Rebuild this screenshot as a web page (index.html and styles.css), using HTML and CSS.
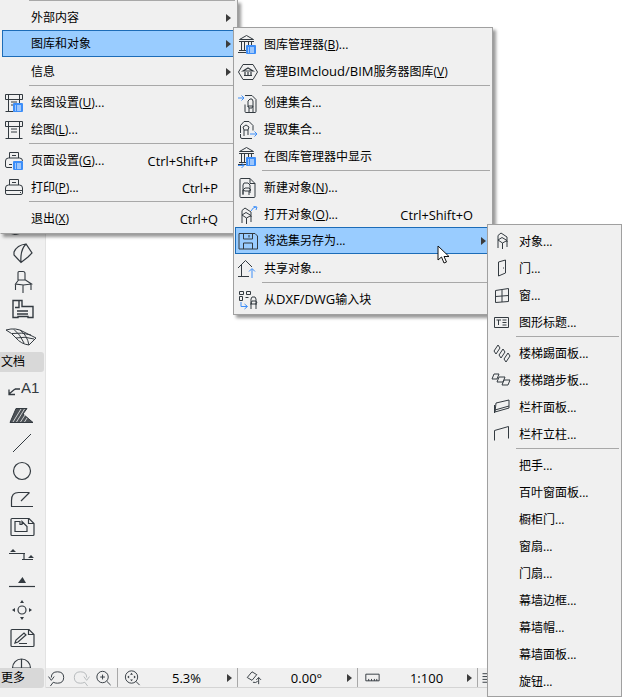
FILE: index.html
```html
<!DOCTYPE html>
<html lang="zh-CN">
<head>
<meta charset="utf-8">
<title>图库和对象</title>
<link rel="stylesheet" href="styles.css">
</head>
<body>
<svg class="defs" width="0" height="0" aria-hidden="true">
  <defs>
    <g id="badge"><rect x="10" y="12" width="10" height="9" rx="1" fill="#3d8ef8" stroke="none"/><path d="M12 15h1M14 15h4M12 17h1M14 17h4M12 19h1M14 19h4" stroke="#fff" fill="none"/></g>
    <g id="bank"><path d="M3.500 6.500 10.500 2.500 17.500 6.500zM3 8.500h15M5.500 9v8M8.500 9v8M12.500 9v8M15.500 9v8M3 17.500h8M2 19.500h8"/></g>
    <g id="chair"><path d="M8 10V5.500L11 3l6 4v5M8 10l4-2.500 5 3-4.500 2.500zM8 10v8M12.500 13v6M17 11v6"/></g>
  </defs>
</svg>

<div class="app">
  <aside class="sidebar">
    <div class="tools">
      <div class="tool"><svg class="ticon" viewBox="0 0 30 28"><path d="M9 21q6 3 13 0"/></svg></div>
      <div class="tool"><svg class="ticon" viewBox="0 0 30 28"><path d="M14 12Q17 5 26 4L32 13 28 17 21 22.500 14 15zM26 4Q20 10 21 22.500" stroke-width="1.200"/></svg></div>
      <div class="tool"><svg class="ticon" viewBox="0 0 30 28"><path d="M18 12V4.500q0-1 1-1h4q2 0 2 2V12M15.500 16l3-4h7l6 4-8 1zM15.500 16v6M23 17v8M31 16v6" stroke-width="1.100"/></svg></div>
      <div class="tool"><svg class="ticon" viewBox="0 0 30 28"><path d="M13 5.500h9v6h11v11h-5v-1H18v1h-5zM19 5.500v7h-4M17 16h11M17 19h11" stroke-width="1.400"/></svg></div>
      <div class="tool"><svg class="ticon" viewBox="0 0 30 28"><path d="M6 7Q16 4 24 9L36 15 29 22Q21 21 16 15 12 10 6 7zM14 6.500Q20 11 24 20M20 7Q27 12 29 22M12 10.500Q22 9 31 12M16 15Q25 13 34 16"/></svg></div>
    </div>
    <div class="tab">文档</div>
    <div class="tools tools-rest">
      <div class="tool"><svg class="ticon" viewBox="0 0 30 28"><path d="M9 20 15 15M9 15.500V20.500H15M15 15H20" stroke-width="1.300"/><text class="ticon-a" x="21" y="19">A1</text></svg></div>
      <div class="tool"><svg class="ticon" viewBox="0 0 30 28"><path d="M10 20.500 16 6.500H27L23 12 33 20.500z" fill="#4c5156" stroke="#333a40"/><path d="M13 20 21 7M16.500 20 24.500 7M20.500 20 25 13M24.500 20 27 16" stroke="#f0f0f0" stroke-width=".8"/></svg></div>
      <div class="tool"><svg class="ticon" viewBox="0 0 30 28"><path d="M13 22 31 4"/></svg></div>
      <div class="tool"><svg class="ticon" viewBox="0 0 30 28"><circle cx="22" cy="14" r="8.500" stroke-width="1.200"/></svg></div>
      <div class="tool"><svg class="ticon" viewBox="0 0 30 28"><path d="M11.500 21.500v-6q0-8 7-8h11M29.500 7.500 21 16M11 21.500h22" stroke-width="1.200"/></svg></div>
      <div class="tool"><svg class="ticon" viewBox="0 0 30 28"><path d="M12 5.500h17l5 5v11q0 1-1 1H12q-1 0-1-1v-15q0-1 1-1zM28.500 5.500v5h5" stroke-width="1.200"/><path d="M15 8.500h5v3h2v-3l5 5v5H15z" stroke-width="1.200"/></svg></div>
      <div class="tool"><svg class="ticon" viewBox="0 0 30 28"><path d="M9 12.500h16M22 18.500h11M24 12.500v6" stroke-width="1.200"/><path d="M13 8l-3 3h6zM31 14l-3 3h6z" fill="#333a40" stroke="none"/></svg></div>
      <div class="tool"><svg class="ticon" viewBox="0 0 30 28"><path d="M22.500 8 26 14h-8z" fill="#333a40" stroke="none"/><path d="M9 17.500h26" stroke-width="1.200"/></svg></div>
      <div class="tool"><svg class="ticon" viewBox="0 0 30 28"><circle cx="22" cy="14" r="4" stroke-width="1.200"/><path d="M22 4l-2 3h4zM22 24l-2-3h4zM12 14l3-2v4zM32 14l-3-2v4z" fill="#333a40" stroke="none"/></svg></div>
      <div class="tool"><svg class="ticon" viewBox="0 0 30 28"><path d="M12 5.500h17l5 5v11q0 1-1 1H12q-1 0-1-1v-15q0-1 1-1zM28.500 5.500v5h5" stroke-width="1.200"/><path d="M15 19l1-3 8-7 2 2-8 7zM19 19.500h8" stroke-width="1.200"/></svg></div>
      <div class="tool"><svg class="ticon" viewBox="0 0 30 28"><circle cx="21.500" cy="16" r="9" stroke-width="1.200"/><path d="M21.500 7v9M13 16h17" stroke-width="1.200"/></svg></div>
    </div>
    <div class="tab tab-more">更多</div>
  </aside>

  <main class="main">
    <div class="canvas"></div>
    <div class="status">
      <div class="tool-btn"><svg class="sicon" viewBox="0 0 23 20"><path d="M5 10q0-6 6.500-6t6.500 6-6.500 6Q9 16 7 15M7 15l-3 4M2 9l3 4 3-4"/></svg></div>
      <div class="tool-btn muted"><svg class="sicon" viewBox="0 0 23 20"><path d="M18 10q0-6-6.500-6T5 10t6.500 6q2.500 0 4.500-1M16 15l3 4M15 9l3 4 3-4"/></svg></div>
      <div class="tool-btn"><svg class="sicon" viewBox="0 0 23 20"><circle cx="10.500" cy="9.500" r="6"/><path d="M15 14l4 4M10.500 7v5M8 9.500h5"/></svg></div>
      <div class="seg">
        <svg class="sicon seg-icon" viewBox="0 0 28 20"><circle cx="13.500" cy="9.500" r="6.500"/><path d="M18 14l4 4"/><path d="M13.500 5l-1.500 2h3zM13.500 14l-1.500-2h3zM9 9.500l2-1.500v3zM18 9.500l-2-1.500v3z" fill="#333a40" stroke="none"/></svg>
        <span class="seg-val">5.3%</span><span class="arrow"></span>
      </div>
      <div class="seg">
        <svg class="sicon seg-icon" viewBox="0 0 28 20"><path d="M9 10l5-6 5 3-5 6zM21 17V10M18.500 12.500 21 10l2.500 2.500M15 15q3 1 5-1"/></svg>
        <span class="seg-val">0.00°</span><span class="arrow"></span>
      </div>
      <div class="seg">
        <svg class="sicon seg-icon" viewBox="0 0 28 20"><path d="M7.500 6.500h14v7h-14zM10.500 13.500v-2M13.500 13.500v-2M16.500 13.500v-2M19 13.500v-2"/></svg>
        <span class="seg-val">1:100</span><span class="arrow"></span>
      </div>
      <div class="seg seg-last"><svg class="sicon seg-icon" viewBox="0 0 28 20"><path d="M4 6h8M4 9h8M4 12h8M4 15h8"/></svg></div>
    </div>
  </main>
</div>

<nav class="menu menu-main">
  <div class="sep"></div>
  <div class="row"><span class="ic"></span><span class="txt">外部内容</span><span class="arrow"></span></div>
  <div class="row hl"><span class="ic"></span><span class="txt">图库和对象</span><span class="arrow"></span></div>
  <div class="row"><span class="ic"></span><span class="txt">信息</span><span class="arrow"></span></div>
  <div class="sep"></div>
  <div class="row"><span class="ic"><svg viewBox="0 0 24 24"><path d="M2.500 3.500h17v5h-17zM5.500 4v16.500M16.500 4v8M2.500 20.500h8M5.500 20.500v-1M8 8.500h6M8 11h6M8 14h3"/><use href="#badge"/></svg></span><span class="txt">绘图设置(<u>U</u>)...</span></div>
  <div class="row"><span class="ic"><svg viewBox="0 0 24 24"><path d="M2.500 3.500h17v5h-17zM5.500 4v16.500M16.500 4v16.500M2.500 20.500h17M8 8.500h6M8 11h6M8 14h6"/></svg></span><span class="txt">绘图(<u>L</u>)...</span></div>
  <div class="sep"></div>
  <div class="row"><span class="ic"><svg viewBox="0 0 24 24"><path d="M6.500 9V3.500h9V9M9 6.500h4M2.500 12q0-3 3-3h11q3 0 3 3M2.500 12v5q0 1.500 1.500 1.500h5M6 15.500h3"/><use href="#badge"/></svg></span><span class="txt">页面设置(<u>G</u>)...</span><span class="key">Ctrl+Shift+P</span></div>
  <div class="row"><span class="ic"><svg viewBox="0 0 24 24"><path d="M6.500 9V3.500h9V9M9 6.500h4M2.500 12q0-3 3-3h11q3 0 3 3v5q0 1.500-1.500 1.500H4q-1.500 0-1.500-1.500zM2.500 14.500h17M17 16.500h1"/></svg></span><span class="txt">打印(<u>P</u>)...</span><span class="key">Ctrl+P</span></div>
  <div class="sep"></div>
  <div class="row"><span class="ic"></span><span class="txt">退出(<u>X</u>)</span><span class="key">Ctrl+Q</span></div>
</nav>

<nav class="menu menu-lib">
  <div class="row"><span class="ic"><svg viewBox="0 0 24 24"><use href="#bank"/><use href="#badge"/></svg></span><span class="txt">图库管理器(<u>B</u>)...</span></div>
  <div class="row"><span class="ic"><svg viewBox="0 0 24 24"><path d="M2.500 12 7 4.500h10l4.500 7.500-4.500 7.500H7z"/><path d="M7 11l5-3 5 3zM8 15.500h8M9 12v3M12 12v3M15 12v3" stroke-width="1.200"/></svg></span><span class="txt">管理<span class="lat">BIMcloud/BIM</span>服务器图库(<u>V</u>)</span></div>
  <div class="sep"></div>
  <div class="row"><span class="ic"><svg viewBox="0 0 24 24"><path d="M9 4.500h7l4 4v12q0 1-1 1h-9q-1 0-1-1v-7"/><path d="M12 10l2-2h2l1 2v5M12 10v6M12 15h5l-1 2h-3zM13 17v4M17 15v6"/><path d="M2 7h6M5.500 4.500 8 7l-2.500 2.500" stroke="#3d8ef8"/></svg></span><span class="txt">创建集合...</span></div>
  <div class="row"><span class="ic"><svg viewBox="0 0 24 24"><path d="M8 3.500h5l4 4v5M4.500 15V7.500l3.500-4M4.500 16v3q0 1.500 1.500 1.500h10"/><path d="M7 9l3-2 3 2-1 3H8zM8 12v6M12 12v5"/><path d="M14 16h7M18.500 13.500 21 16l-2.500 2.500" stroke="#3d8ef8"/></svg></span><span class="txt">提取集合...</span></div>
  <div class="row"><span class="ic"><svg viewBox="0 0 24 24"><use href="#bank"/><use href="#badge"/><path d="M2 20.500h6M5.500 18 8 20.500 5.500 23" stroke="#3d8ef8"/></svg></span><span class="txt">在图库管理器中显示</span></div>
  <div class="sep"></div>
  <div class="row"><span class="ic"><svg viewBox="0 0 24 24"><path d="M5 2.500h9l5 5v13q0 1-1 1H5q-1 0-1-1v-17q0-1 1-1zM14 2.500v5h5"/><path d="M8 7h4l2 2v8M8 7 7 9v9M7 14l2-2h4l2 2-2 1H9zM7 14v5M13 15v4"/></svg></span><span class="txt">新建对象(<u>N</u>)...</span></div>
  <div class="row"><span class="ic"><svg viewBox="0 0 24 24"><use href="#chair" transform="translate(-2 2)"/><path d="M15 8q2-4 5-4M17.500 3.500 21 4l-1 3" stroke="#3d8ef8"/></svg></span><span class="txt">打开对象(<u>O</u>)...</span><span class="key">Ctrl+Shift+O</span></div>
  <div class="row hl"><span class="ic"><svg viewBox="0 0 24 24"><path d="M3 4.500h16l2.500 2.500v13H3zM7.500 5v5h9V5M13 6v2.500M7.500 20v-6h9v6"/></svg></span><span class="txt">将选集另存为...</span><span class="arrow"></span></div>
  <div class="row"><span class="ic"><svg viewBox="0 0 24 24"><path d="M2 11 9.500 3.500 16 10M5.500 8v11.500M2 19.500h11"/><path d="M16 21V12M13 14.500l3-3 3 3" stroke="#3d8ef8"/></svg></span><span class="txt">共享对象...</span></div>
  <div class="sep"></div>
  <div class="row"><span class="ic"><svg viewBox="0 0 24 24"><path d="M3.500 3.500h4v3h-4zM10.500 3.500h4v3h-4zM3.500 8.500h3v4h-3zM9.500 9.500h3"/><path d="M16 9h3l1 2v6M16 9l-1 2v6M15 15l1-2h4l1 2-2 1h-3zM15 15v6M20 16v5"/><path d="M5 14v4.500h6M8.500 16l3 2.500-3 2.500" stroke="#3d8ef8"/></svg></span><span class="txt">从<span class="lat">DXF/DWG</span>输入块</span></div>
</nav>

<nav class="menu menu-save">
  <div class="row"><span class="ic"><svg viewBox="0 0 24 24"><use href="#chair"/></svg></span><span class="txt">对象...</span></div>
  <div class="row"><span class="ic"><svg viewBox="0 0 24 24"><path d="M8.500 5l7-2v13l-7 3zM13.500 10.500v1"/></svg></span><span class="txt">门...</span></div>
  <div class="row"><span class="ic"><svg viewBox="0 0 24 24"><path d="M5.500 6.500l13-2v13l-13 1zM12 6v12M5.500 12.500l13-1"/></svg></span><span class="txt">窗...</span></div>
  <div class="row"><span class="ic"><svg viewBox="0 0 24 24"><path d="M4.500 6.500h14v10h-14zM6.500 9h4.500M8.500 9v5M12.500 9h4M12.500 11.500h4M12.500 14h4"/></svg></span><span class="txt">图形标题...</span></div>
  <div class="sep"></div>
  <div class="row"><span class="ic"><svg viewBox="0 0 24 24"><path d="M4 9l4-6 2 3-4 6zM9 13l4-6 2 3-4 6zM14 17l4-6 2 3-4 6z"/></svg></span><span class="txt">楼梯踢面板...</span></div>
  <div class="row"><span class="ic"><svg viewBox="0 0 24 24"><path d="M4 5h5L7 10H2zM9 8h6l-2 5H7zM14 11h6l-2 5h-6z"/></svg></span><span class="txt">楼梯踏步板...</span></div>
  <div class="row"><span class="ic"><svg viewBox="0 0 24 24"><path d="M6 7l13-3v8L5 16zM4.500 17V9M5 14l14-4"/></svg></span><span class="txt">栏杆面板...</span></div>
  <div class="row"><span class="ic"><svg viewBox="0 0 24 24"><path d="M4.500 17.500V7.500l14-4v12"/></svg></span><span class="txt">栏杆立柱...</span></div>
  <div class="sep"></div>
  <div class="row"><span class="ic"></span><span class="txt">把手...</span></div>
  <div class="row"><span class="ic"></span><span class="txt">百叶窗面板...</span></div>
  <div class="row"><span class="ic"></span><span class="txt">橱柜门...</span></div>
  <div class="row"><span class="ic"></span><span class="txt">窗扇...</span></div>
  <div class="row"><span class="ic"></span><span class="txt">门扇...</span></div>
  <div class="row"><span class="ic"></span><span class="txt">幕墙边框...</span></div>
  <div class="row"><span class="ic"></span><span class="txt">幕墙帽...</span></div>
  <div class="row"><span class="ic"></span><span class="txt">幕墙面板...</span></div>
  <div class="row"><span class="ic"></span><span class="txt">旋钮...</span></div>
</nav>

<svg class="cursor" viewBox="0 0 14 20"><path d="M1 1v14l3.500-3 2.500 6 2.500-1-2.500-5.500h5z" fill="#fff" stroke="#111"/></svg>
</body>
</html>
```

FILE: styles.css
```css
* { box-sizing: border-box; }

html, body {
  margin: 0;
  height: 697px;
  overflow: hidden;
}

body {
  position: relative;
  background: #f0f0f0;
  color: #000;
  font: 12px/16px "Open Sans", "Noto Sans CJK SC", sans-serif;
}

.defs { position: absolute; }

svg { display: block; }

.app {
  display: flex;
  height: 688px;
}

.sidebar {
  width: 46px;
  flex: none;
  display: flex;
  flex-direction: column;
  border-right: 1px solid #e2e2e2;
  overflow: hidden;
}

.tools { padding-top: 212px; flex: none; }

.tools-rest {
  padding-top: 2px;
  flex: 1;
  min-height: 0;
  overflow: hidden;
}

.tool { height: 27.8px; }

.ticon {
  width: 30px;
  height: 28px;
  overflow: visible;
  fill: none;
  stroke: #333a40;
  stroke-width: 1;
}

.ticon-a {
  font: 15px "Liberation Sans", sans-serif;
  fill: #333a40;
  stroke: none;
}

.tab {
  flex: none;
  height: 20px;
  margin-top: 1px;
  margin-right: 1px;
  padding-left: 1px;
  background: #d8d8d8;
  border-radius: 0 3px 3px 0;
  font-size: 12px;
  line-height: 19px;
}

.tab-more { margin-top: 0; }

.main {
  flex: 1;
  min-width: 0;
  display: flex;
  flex-direction: column;
}

.canvas { flex: 1; background: #fff; }

.status {
  flex: none;
  height: 20px;
  display: flex;
  align-items: stretch;
  background: #f0f0f0;
  border-bottom: 1px solid #d4d4d4;
  font-size: 13px;
}

.tool-btn { width: 23px; flex: none; }

.tool-btn:nth-child(3) { width: 25px; }

.sicon {
  width: 23px;
  height: 19px;
  fill: none;
  stroke: #333a40;
}

.muted .sicon { stroke: #b4b8bb; }

.seg {
  width: 120px;
  flex: none;
  display: flex;
  align-items: center;
  padding-right: 5px;
  border-left: 1px solid #a8a8a8;
}

.seg-icon { width: 28px; flex: none; }

.seg-val { flex: 1; text-align: center; }

.seg-last { border-left: 1px solid #a8a8a8; }

.arrow {
  width: 0;
  height: 0;
  flex: none;
  border-style: solid;
  border-width: 4px 0 4px 5px;
  border-color: transparent transparent transparent #3c3c3c;
}

.menu {
  position: absolute;
  background: #f0f0f0;
  border: 1px solid #a0a0a0;
  box-shadow: 3px 3px 3px rgba(0, 0, 0, 0.4);
}

.menu-main {
  left: 0;
  top: 0;
  width: 238px;
  height: 234px;
  border-top: 0;
  border-left-color: #f0f0f0;
}

.menu-lib {
  left: 233px;
  top: 27px;
  width: 260px;
  height: 288px;
  padding-top: 3px;
}

.menu-save {
  left: 487px;
  top: 224px;
  width: 135px;
  height: 473px;
  padding-top: 3px;
}

.row {
  height: 27px;
  margin: 0 1px;
  display: flex;
  align-items: center;
  border: 1px solid transparent;
  padding-right: 4px;
}

.row.hl {
  margin-top: -1px;
  margin-bottom: 1px;
  padding-top: 1px;
  background: #99ccff;
  border-color: #1c6cb8;
}

.ic {
  width: 24px;
  height: 24px;
  flex: none;
  margin-right: 4px;
}

.ic svg {
  width: 24px;
  height: 24px;
  fill: none;
  stroke: #333a40;
  overflow: visible;
}

.menu-save .ic { margin-right: 5px; }

.txt { flex: 1; white-space: nowrap; }

.lat { font-size: 13px; }

.key { flex: none; padding-right: 13px; font-size: 12.8px; }

.sep {
  height: 4px;
  margin-left: 28px;
  margin-right: 2px;
  background: linear-gradient(#a8a8a8 1px, transparent 1px);
}

.cursor {
  position: absolute;
  left: 437px;
  top: 245px;
  width: 14px;
  height: 20px;
}
```
